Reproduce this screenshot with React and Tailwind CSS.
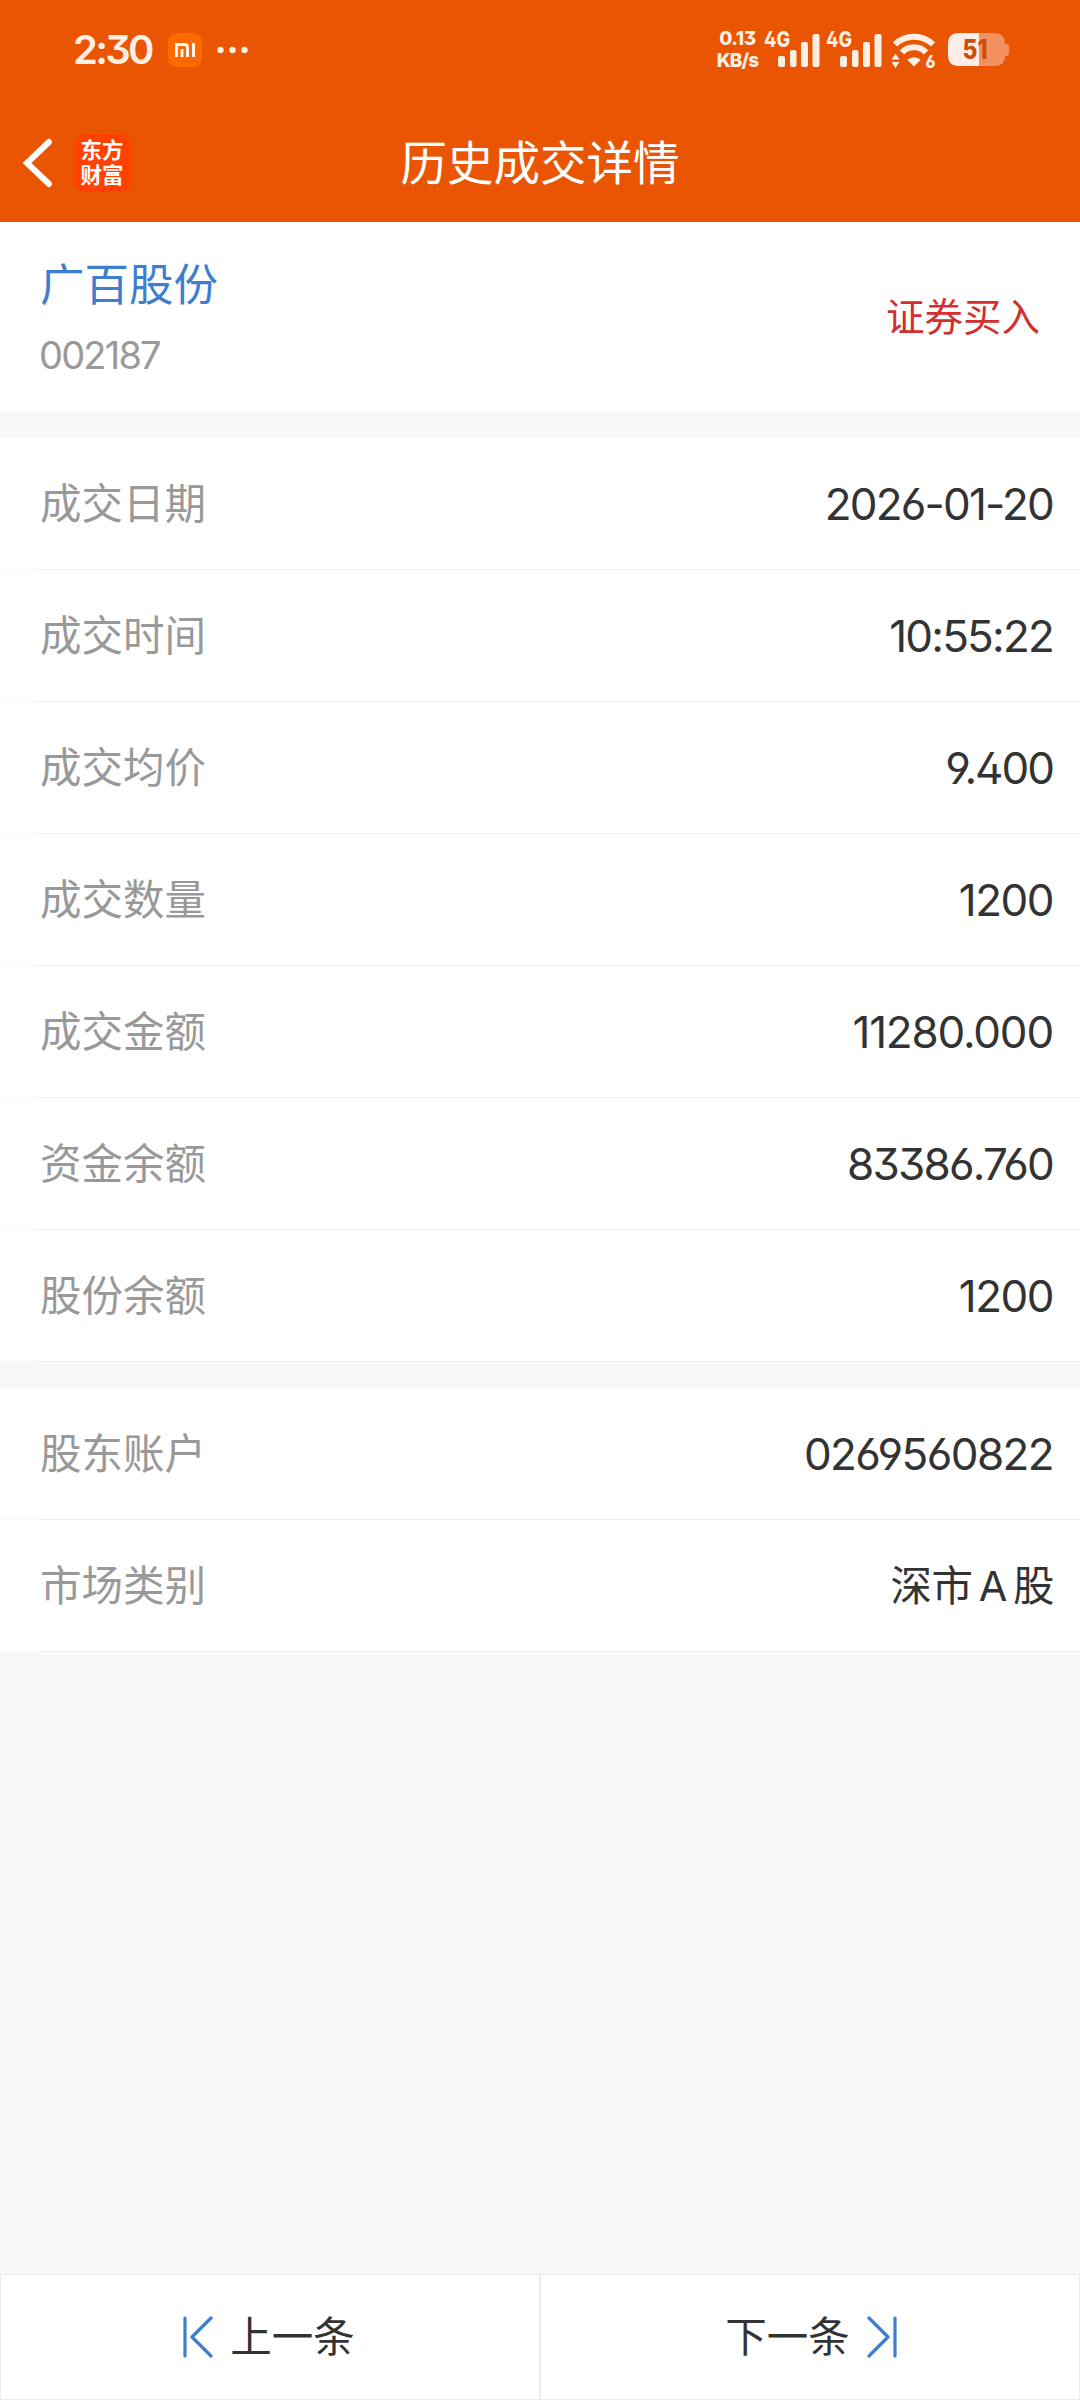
const tradeRows = [
    { label: "成交日期", value: "2026-01-20", tracking: "tracking-[-1.8px]" },
    { label: "成交时间", value: "10:55:22", tracking: "tracking-[-1.8px]" },
    { label: "成交均价", value: "9.400", tracking: "tracking-[-2px]" },
    { label: "成交数量", value: "1200", tracking: "tracking-[-1.5px]" },
    { label: "成交金额", value: "11280.000", tracking: "tracking-[-1.2px]" },
    { label: "资金余额", value: "83386.760", tracking: "tracking-[-1.8px]" },
    { label: "股份余额", value: "1200", tracking: "tracking-[-1.5px]" },
];

const accountRows = [
    { label: "股东账户", value: "0269560822", tracking: "tracking-[-1.6px]" },
    { label: "市场类别", value: "深市 A 股", tracking: "tracking-[-0.5px] [word-spacing:-5px]", cjk: true },
];

// Signal bars with the network type in the corner
function Signal() {
    return (
        <svg width="56" height="38" viewBox="0 0 56 38" fill="#ffeee2" className="overflow-visible">
            <text x="0" y="15.5" fontSize="21" fontWeight="800" textLength="26" lengthAdjust="spacingAndGlyphs">4G</text>
            <rect x="14" y="25" width="7" height="11" rx="2" />
            <rect x="26" y="19" width="6.5" height="17" rx="2" />
            <rect x="37" y="11" width="7" height="25" rx="2" />
            <rect x="48.5" y="3" width="7" height="33" rx="2" />
        </svg>
    );
}

function WifiIcon() {
    return (
        <svg width="46" height="38" viewBox="0 0 46 38" fill="none" className="overflow-visible">
            <path d="M4 13.5 C14 3 32 3 42 13.5" stroke="#ffeee2" strokeWidth="6" />
            <path d="M11 21.5 C17 14.5 29 14.5 35 21.5" stroke="#ffeee2" strokeWidth="6" />
            <path d="M16.5 29 C20 25.3 26 25.3 29.5 29 L23 35.5 Z" fill="#ffeee2" />
            <path d="M0.5 28.5 L4.5 22.5 L8.5 28.5 Z M0.5 31 L8.5 31 L4.5 37 Z" fill="#ffeee2" />
            <text x="34.5" y="36.5" fontSize="17" fontWeight="800" fill="#ffeee2" textLength="10" lengthAdjust="spacingAndGlyphs">6</text>
        </svg>
    );
}

function Battery() {
    return (
        <svg width="62" height="34" viewBox="0 0 62 34">
            <path d="M31 0 H46 Q57 0 57 11 H58 Q61 11 61 14 V20 Q61 23 58 23 H57 Q57 33 46 33 H31 Z" fill="#f4925f" />
            <path d="M31 0 H11 Q0 0 0 11 V22 Q0 33 11 33 H31 Z" fill="#ffeee8" />
            <text x="14.5" y="26" fontSize="26.5" fontWeight="800" fill="#cc4e08" textLength="25" lengthAdjust="spacingAndGlyphs">51</text>
        </svg>
    );
}

function StatusBar() {
    return (
        <div className="flex h-[100px] items-center pl-[73px] pr-[70px] text-[#ffeee2]">
            <span className="w-[95px] text-[40px] font-semibold leading-none tracking-[-2.7px]">2:30</span>
            <svg width="34" height="34" viewBox="0 0 34 34">
                <rect width="34" height="34" rx="9" fill="#ff6a00" />
                <path d="M8.5 24 V11.5 H16.5 Q19.5 11.5 19.5 14.5 V24 M14 24 V16 M25.5 24 V10" fill="none" stroke="#fff" strokeWidth="2.8" />
            </svg>
            <svg className="ml-[15px]" width="32" height="8" viewBox="0 0 32 8" fill="#ffeee2">
                <circle cx="3.5" cy="4" r="3.2" />
                <circle cx="15.5" cy="4" r="3.2" />
                <circle cx="27.5" cy="4" r="3.2" />
            </svg>
            <div className="ml-auto flex items-center">
                <div className="mr-[5px] flex w-[43px] flex-col items-center gap-[2px] pb-px text-[19px] font-extrabold leading-5">
                    <span className="tracking-[-0.5px]">0.13</span>
                    <span className="tracking-[-0.9px]">KB/s</span>
                </div>
                <Signal />
                <div className="w-[6px]" />
                <Signal />
                <div className="w-[9px]" />
                <WifiIcon />
                <div className="w-[11px]" />
                <Battery />
            </div>
        </div>
    );
}

function NavBar() {
    return (
        <div className="grid h-[122px] grid-cols-[1fr_auto_1fr] items-center pt-[4px] text-white">
            <div className="flex items-center pl-[21px]">
                <svg width="32" height="50" viewBox="0 0 32 50" fill="none">
                    <path d="M28 4 L6 25 L28 46" stroke="#fff" strokeWidth="6" strokeLinecap="round" />
                </svg>
                <div className="ml-[20px] flex size-[58px] flex-col items-center justify-center rounded-[12px] bg-[#ff4200] text-[21.5px] font-bold leading-[25px]">
                    <span>东方</span>
                    <span>财富</span>
                </div>
            </div>
            <h1 className="text-[46.5px] font-normal leading-none">历史成交详情</h1>
        </div>
    );
}

function Row({ label, value, tracking, cjk }) {
    return (
        <div className="flex h-[132px] flex-col bg-white">
            <div className={`flex flex-1 items-center justify-between pl-[40px] ${cjk ? "pr-[26px]" : "pr-[27px]"}`}>
                <span className="pt-[2px] text-[41.5px] leading-none text-[#999]">{label}</span>
                <span className={`leading-none text-[#333] ${cjk ? "pt-[2px] text-[41.5px]" : "text-[44px] font-[370]"} ${tracking}`}>
                    {value}
                </span>
            </div>
            {/* Divider is lighter under the left padding */}
            <div className="flex h-px">
                <div className="w-[39px] bg-[#f8f8f8]" />
                <div className="flex-1 bg-[#ebebeb]" />
            </div>
        </div>
    );
}

export default function App() {
    return (
        <div className="flex h-[2400px] w-[1080px] flex-col bg-[#f7f8fa] font-['Inter','Noto_Sans_CJK_SC',sans-serif] [font-feature-settings:'ss01']">
            <header className="bg-[#ea5503]">
                <StatusBar />
                <NavBar />
            </header>

            {/* Stock info */}
            <section className="flex h-[190px] items-center justify-between bg-white pl-[40px] pr-[40px]">
                <div className="flex flex-col gap-[28px] pt-[3px]">
                    <span className="text-[44.5px] leading-none text-[#3d7ecf]">广百股份</span>
                    <span className="-ml-px text-[38px] leading-none tracking-[-1.8px] text-[#999]">002187</span>
                </div>
                <span className="text-[38.5px] leading-none text-[#d32f2f]">证券买入</span>
            </section>

            <section className="mt-[26px]">
                {tradeRows.map((row) => (
                    <Row key={row.label} {...row} />
                ))}
            </section>

            <section className="mt-[26px]">
                {accountRows.map((row) => (
                    <Row key={row.label} {...row} />
                ))}
            </section>

            {/* Prev / next */}
            <footer className="mt-auto grid h-[126px] grid-cols-2 text-[41.5px] leading-none text-[#333]">
                <button className="flex items-center justify-center gap-[17px] border border-[#ebebeb] bg-white pr-[2px]">
                    <svg width="30" height="42" viewBox="0 0 30 42" fill="none" stroke="#3d7ecf" strokeWidth="3.2" strokeLinecap="round" strokeLinejoin="round">
                        <path d="M2 2 V40 M28 2 L9 21 L28 40" />
                    </svg>
                    <span className="pt-[2px]">上一条</span>
                </button>
                <button className="flex items-center justify-center gap-[17px] border border-[#ebebeb] bg-white pl-[2px]">
                    <span className="pt-[2px]">下一条</span>
                    <svg width="30" height="42" viewBox="0 0 30 42" fill="none" stroke="#3d7ecf" strokeWidth="3.2" strokeLinecap="round" strokeLinejoin="round">
                        <path d="M28 2 V40 M2 2 L21 21 L2 40" />
                    </svg>
                </button>
            </footer>
        </div>
    );
}
